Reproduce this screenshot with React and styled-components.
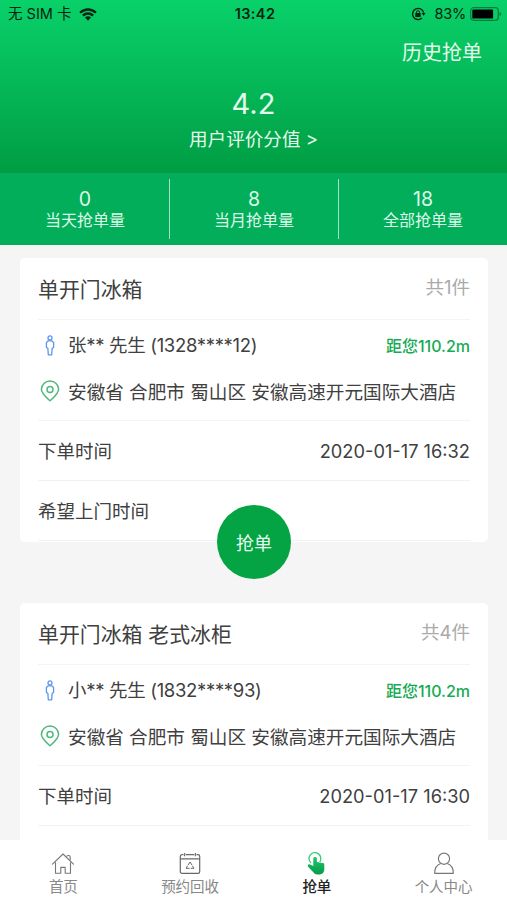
import React from 'react';
import styled, { createGlobalStyle } from "styled-components";

export default () => {
  return (
    <AppDiv>
      <GlobalStyle />
      <Header>
        <StatusBar>
          <Carrier>无 SIM 卡<WifiIcon /></Carrier>
          <Clock>13:42</Clock>
          <Power><LockIcon /><Percent>83%</Percent><BatteryIcon /></Power>
        </StatusBar>
        <History>历史抢单</History>
        <Score>4.2</Score>
        <ScoreLabel>用户评价分值 &gt;</ScoreLabel>
      </Header>
      <Stats>
        {stats.map(s => (
          <Stat key={s.label}>
            <StatValue>{s.value}</StatValue>
            <StatLabel>{s.label}</StatLabel>
          </Stat>
        ))}
      </Stats>
      <List>
        {orders.map(o => <Order key={o.time} order={o} />)}
      </List>
      <TabBar>
        {tabs.map(t => (
          <Tab key={t.label} $active={t.active}>
            <t.icon />
            <TabLabel>{t.label}</TabLabel>
          </Tab>
        ))}
      </TabBar>
    </AppDiv>
  );
}

const Order = ({ order }) => {
  return (
    <Card>
      <TitleRow>
        <Title>{order.title}</Title>
        <Count>共{order.count}件</Count>
      </TitleRow>
      <Contact>
        <ContactRow>
          <IconBox><PersonIcon /></IconBox>
          <Name>{order.name}</Name>
          <Distance>距您110.2m</Distance>
        </ContactRow>
        <ContactRow>
          <IconBox><PinIcon /></IconBox>
          <Address>安徽省 合肥市 蜀山区 安徽高速开元国际大酒店</Address>
        </ContactRow>
      </Contact>
      <InfoRow>
        <span>下单时间</span>
        <Time>{order.time}</Time>
      </InfoRow>
      {order.canGrab && (
        <>
          <InfoRow>
            <span>希望上门时间</span>
          </InfoRow>
          <GrabButton>抢单</GrabButton>
        </>
      )}
    </Card>
  );
}

const WifiIcon = () => (
  <svg width="18" height="13" viewBox="0 0 18 13" fill="none" stroke="#03240f" strokeWidth="2.3">
    <path d="M1.1 4.7a11.3 11.3 0 0 1 15.8 0" />
    <path d="M3.9 7.6a7.3 7.3 0 0 1 10.2 0" />
    <path d="M6 9.6a4.3 4.3 0 0 1 6 0L9 12.7z" fill="#03240f" stroke="none" />
  </svg>
);

const LockIcon = () => (
  <svg width="15" height="14" viewBox="0 0 15 14" fill="none" stroke="#03240f" strokeWidth="1.4">
    <path d="M12.6 5.6A5.6 5.6 0 1 0 11 11.1" />
    <path d="M10.6 6h4l-2 2.8z" fill="#03240f" stroke="none" />
    <rect x="4.3" y="6" width="5.4" height="4" rx="0.4" fill="#03240f" stroke="none" />
    <path d="M5.5 6.4V5.2a1.5 1.5 0 0 1 3 0v1.2" strokeWidth="1" />
  </svg>
);

const BatteryIcon = () => (
  <svg width="32" height="14" viewBox="0 0 32 14">
    <rect x="0.7" y="0.7" width="27.6" height="12.6" rx="3" fill="none" stroke="#047c3b" strokeWidth="1.2" />
    <rect x="2.3" y="2.4" width="20.8" height="9.2" rx="1.2" fill="#000" />
    <path d="M29.6 4.9c2 .6 2 3.600 0 4.200z" fill="#047c3b" />
  </svg>
);

const PersonIcon = () => (
  <svg width="10" height="21" viewBox="0 0 10 21" fill="none" stroke="#5c97ec" strokeWidth="1.3" strokeLinejoin="round">
    <circle cx="5" cy="2.9" r="2" />
    <path d="M3.3 5.8h3.4l1.900 1.600v4.800l-1.500 1.300-.4 6.300H3.300l-.4-6.300-1.500-1.300V7.400z" />
  </svg>
);

const PinIcon = () => (
  <svg width="20" height="22" viewBox="0 0 20 22" fill="none" stroke="#4fb878" strokeWidth="1.5">
    <path d="M10 20.8C7 18 1.4 13.8 1.4 9.3a8.6 8.3 0 0 1 17.2 0C18.6 13.8 13 18 10 20.8z" strokeLinejoin="round" />
    <circle cx="10" cy="9.5" r="3" />
  </svg>
);

const HomeIcon = () => (
  <svg width="24" height="24" viewBox="0 0 24 24" fill="none" stroke="#777" strokeWidth="1.1" strokeLinejoin="round">
    <path d="M1.5 13.2 12 3l10.500 10.200" strokeLinecap="round" />
    <path d="M4.500 11.200v11h5.300v-5.800h4.400v5.800h5.300v-11" />
    <path d="M15.500 5.600c.3-1.600 3.700-1.500 3.700.3v3" />
  </svg>
);

const RecycleIcon = () => (
  <svg width="24" height="24" viewBox="0 0 24 24" fill="none" stroke="#686868" strokeWidth="1.2">
    <path d="M5.500 3.600H4A1.700 1.700 0 0 0 2.300 5.300v15.400a1.700 1.700 0 0 0 1.700 1.700h16a1.700 1.700 0 0 0 1.700-1.700V5.300A1.700 1.700 0 0 0 20 3.600h-1.500M8 3.600h8" />
    <path d="M6.700 2v3.300M17.300 2v3.300M2.300 7.900h19.400" />
    <path d="M10 14 12 11l2 3M14.400 14.700l1.500 2.600h-3.200M11.500 17.300H8.100l1.500-2.600" strokeWidth="1" />
  </svg>
);

const TapIcon = () => (
  <svg width="24" height="24" viewBox="0 0 24 24">
    <defs>
      <linearGradient id="tap" x1="0" y1="0" x2="0" y2="1">
        <stop offset="0" stopColor="#1bc870" />
        <stop offset="1" stopColor="#079a48" />
      </linearGradient>
    </defs>
    <path d="M6 12A5.900 5.900 0 1 1 14.700 11" fill="none" stroke="#35cb7e" strokeWidth="1.300" />
    <path d="M8.300 7.700c0-2.300 3.600-2.300 3.600 0v3.800c.8-.8 2-.5 2.400.3.800-.7 2-.5 2.400.5 1-.5 2.600-.1 2.600 1.200v4.500c0 3.300-2 5.400-4.600 5.400h-2.400c-1.500 0-2.600-.6-3.500-1.700L3.300 16c-1.200-1.400-.1-3.200 1.700-2.500l3.300 1.600z" fill="url(#tap)" />
  </svg>
);

const UserIcon = () => (
  <svg width="24" height="24" viewBox="0 0 24 24" fill="none" stroke="#777" strokeWidth="1.2" strokeLinejoin="round">
    <circle cx="12" cy="7.700" r="5.600" />
    <path d="M8.800 12.500C5 13.700 2.700 17 2.700 22.300h18.600c0-5.300-2.300-8.600-6.100-9.800" />
  </svg>
);

const stats = [
  { value: 0, label: '当天抢单量' },
  { value: 8, label: '当月抢单量' },
  { value: 18, label: '全部抢单量' },
];

const orders = [
  { title: '单开门冰箱', count: 1, name: '张** 先生 (1328****12)', time: '2020-01-17 16:32', canGrab: true },
  { title: '单开门冰箱 老式冰柜', count: 4, name: '小** 先生 (1832****93)', time: '2020-01-17 16:30' },
];

const tabs = [
  { label: '首页', icon: HomeIcon },
  { label: '预约回收', icon: RecycleIcon },
  { label: '抢单', icon: TapIcon, active: true },
  { label: '个人中心', icon: UserIcon },
];

const GlobalStyle = createGlobalStyle`
  * {
    box-sizing: border-box;
  }
  body {
    margin: 0;
    overflow: hidden;
    font-family: Inter, "Noto Sans CJK SC", sans-serif;
    color: #404040;
  }
  svg {
    display: block;
    flex: none;
  }
`;

const AppDiv = styled.div`
  width: 100%;
  height: 900px;
  display: flex;
  flex-direction: column;
  overflow: hidden;
  background: #f5f5f5;
  white-space: nowrap;
`;

const Header = styled.div`
  flex: none;
  height: 173px;
  display: flex;
  flex-direction: column;
  color: #e4faec;
  background: linear-gradient(#09d16a, #009d43);
`;

const StatusBar = styled.div`
  height: 28px;
  padding: 0 5px 0 8px;
  display: grid;
  grid-template-columns: 1fr auto 1fr;
  align-items: center;
  color: #03240f;
  font-size: 14.5px;
  line-height: 28px;
`;

const Carrier = styled.div`
  display: flex;
  align-items: center;
  gap: 8px;
`;

const Clock = styled.div`
  font-size: 14.5px;
  font-weight: 600;
  letter-spacing: 0.4px;
`;

const Power = styled.div`
  display: flex;
  align-items: center;
  justify-content: flex-end;
`;

const Percent = styled.span`
  margin: 0 4px 0 8px;
  font-size: 14.5px;
  letter-spacing: -0.2px;
`;

const History = styled.div`
  align-self: flex-end;
  margin-right: 25px;
  height: 48px;
  font-size: 20px;
  line-height: 51px;
`;

const Score = styled.div`
  height: 50px;
  text-align: center;
  font-size: 29px;
  line-height: 55px;
`;

const ScoreLabel = styled.div`
  text-align: center;
  font-size: 18.6px;
  line-height: 26px;
`;

const Stats = styled.div`
  flex: none;
  height: 72px;
  display: flex;
  align-items: center;
  color: #dcf8e8;
  background: #03ae5b;
`;

const Stat = styled.div`
  flex: 1;
  height: 60px;
  padding-top: 9px;
  display: flex;
  flex-direction: column;
  align-items: center;

  &:first-child {
    padding-left: 1px;
  }
  & + & {
    border-left: 1px solid #a5e2c3;
  }
`;

const StatValue = styled.div`
  font-size: 19.5px;
  line-height: 22px;
`;

const StatLabel = styled.div`
  font-size: 16px;
  line-height: 20px;
`;

const List = styled.div`
  flex: 1;
  min-height: 0;
  overflow: hidden;
  padding: 13px 19px 0 20px;
`;

const Card = styled.div`
  position: relative;
  height: 284px;
  margin-bottom: 61px;
  padding: 0 18px;
  background: #fff;
  border-radius: 5px;
`;

const TitleRow = styled.div`
  height: 62px;
  display: flex;
  justify-content: space-between;
  align-items: center;
  border-bottom: 1px solid #f4f4f4;
`;

const Title = styled.div`
  margin-top: -2px;
  font-size: 20.9px;
`;

const Count = styled.div`
  margin-top: -5px;
  color: #aaa;
  font-size: 18.5px;
`;

const Contact = styled.div`
  height: 101px;
  padding-top: 2px;
  border-bottom: 1px solid #f4f4f4;
`;

const ContactRow = styled.div`
  height: 46px;
  display: flex;
  align-items: center;
`;

const IconBox = styled.div`
  width: 23px;
  margin-right: 7px;
  display: flex;
  justify-content: center;
`;

const Name = styled.div`
  flex: 1;
  margin-top: -2px;
  font-size: 18.5px;
  letter-spacing: -0.32px;
`;

const Distance = styled.div`
  color: #16ab53;
  font-size: 16px;
  font-weight: 500;
`;

const Address = styled.div`
  margin-top: -2px;
  font-size: 18.64px;
`;

const InfoRow = styled.div`
  height: 60px;
  padding-bottom: 2px;
  display: flex;
  justify-content: space-between;
  align-items: center;
  border-bottom: 1px solid #f2f2f2;
  font-size: 18.5px;
`;

const Time = styled.span`
  margin-top: 2px;
  font-size: 18.25px;
`;

// sits half over the bottom edge of the card
const GrabButton = styled.button`
  position: absolute;
  left: 197px;
  bottom: -37px;
  width: 74px;
  height: 74px;
  padding: 0;
  border: 0;
  border-radius: 50%;
  background: #04a444;
  color: #e8fbef;
  font-family: inherit;
  font-size: 18px;
`;

const TabBar = styled.div`
  flex: none;
  height: 60px;
  padding-top: 11px;
  display: flex;
  background: #fff;
`;

const Tab = styled.div`
  flex: 1;
  display: flex;
  flex-direction: column;
  align-items: center;
  color: ${props => props.$active ? '#222' : '#888'};
  font-weight: ${props => props.$active ? 500 : 400};
`;

const TabLabel = styled.div`
  font-size: 14.5px;
  line-height: 23px;
`;
